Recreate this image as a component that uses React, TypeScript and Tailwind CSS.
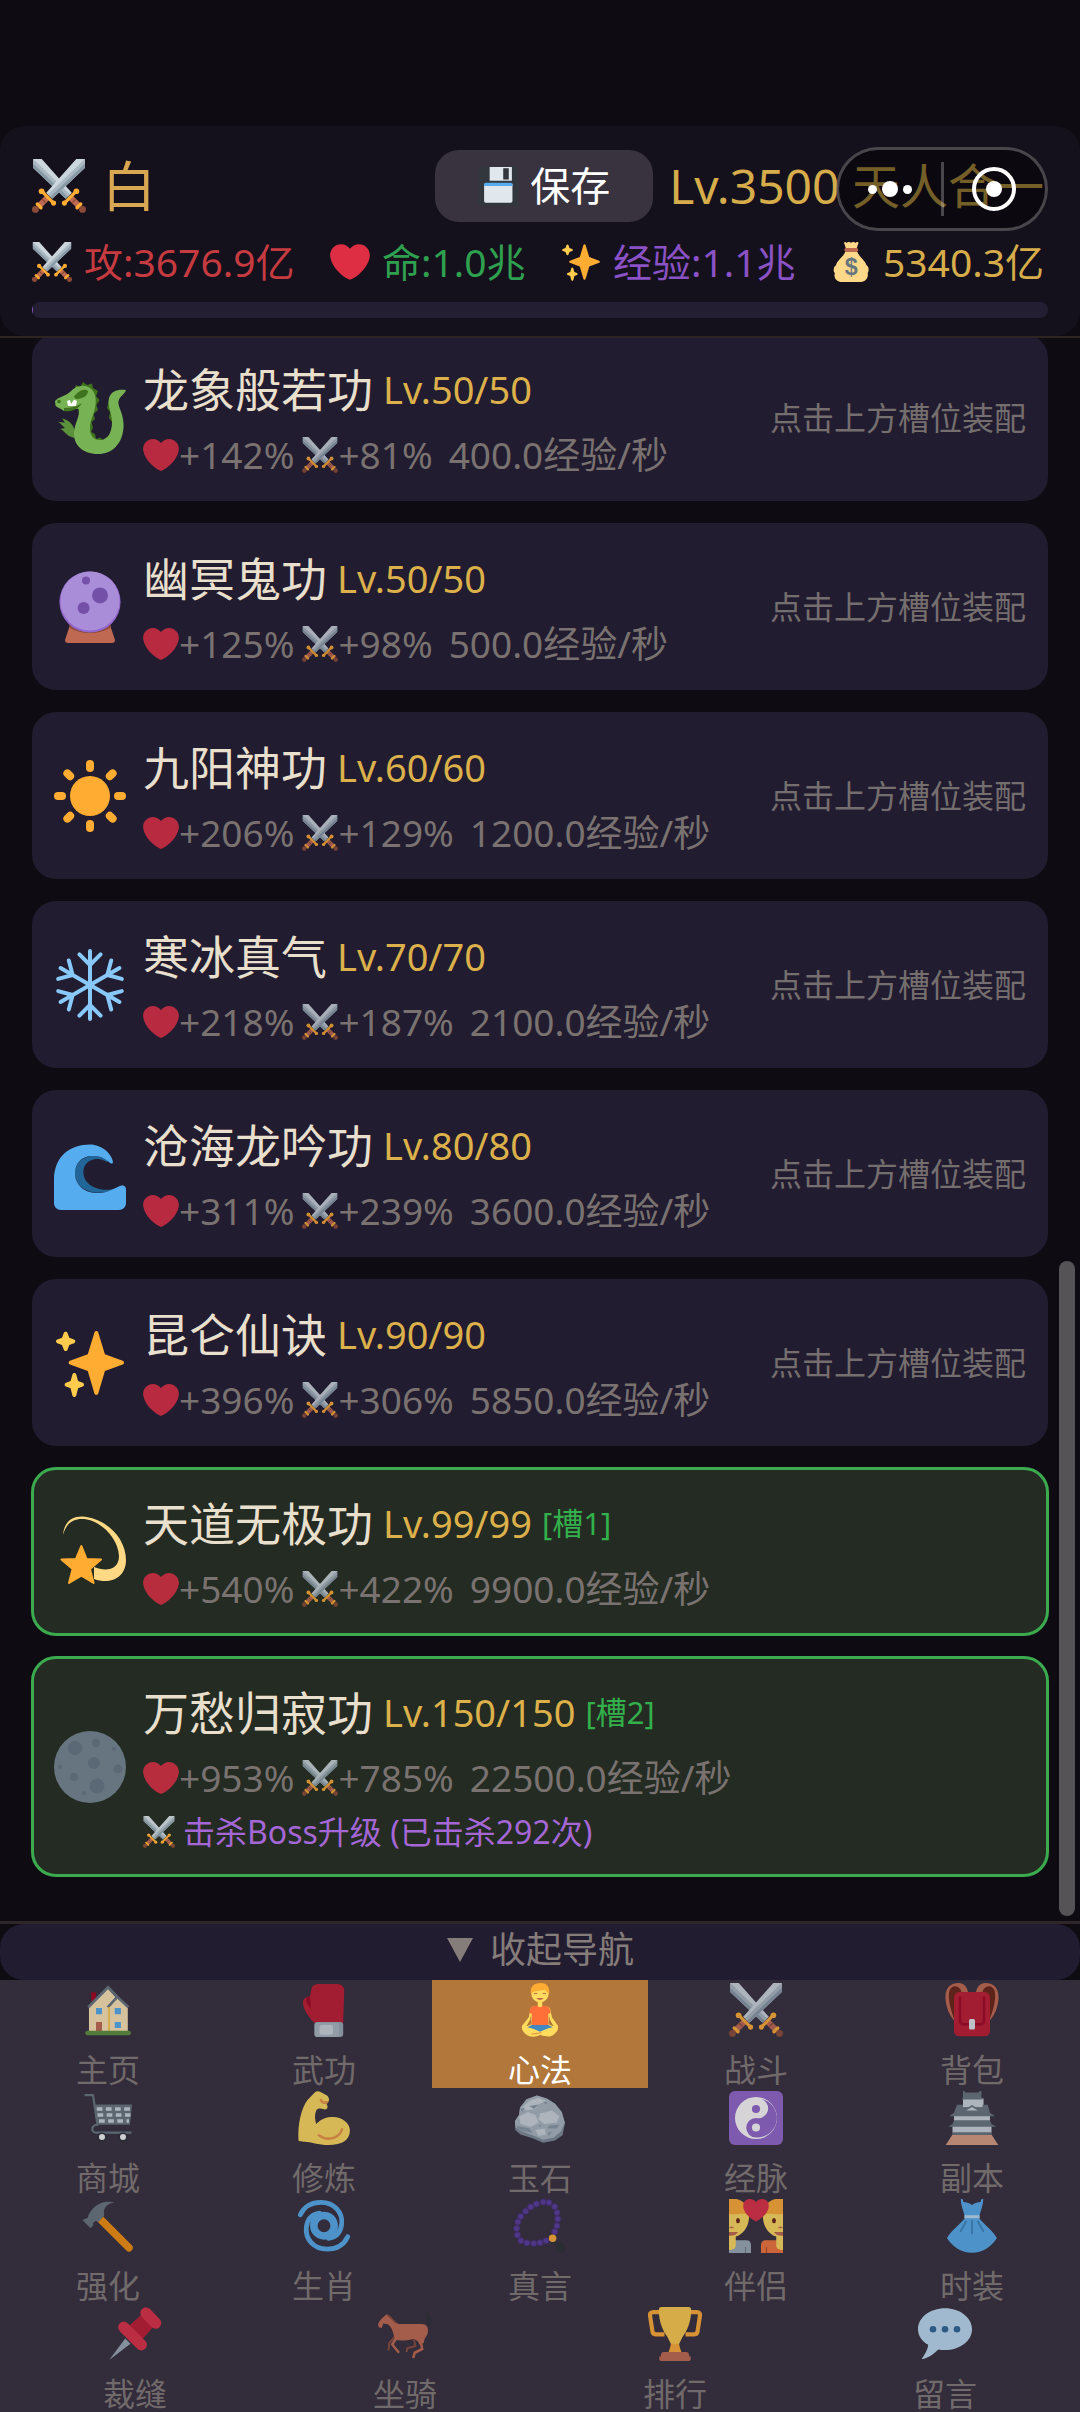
import type { ReactNode } from 'react';

type IconName =
  | 'swords' | 'heart' | 'sparkles' | 'money' | 'disk' | 'dragon' | 'crystal' | 'sun' | 'snow' | 'wave'
  | 'dizzy' | 'moon' | 'house' | 'glove' | 'lotus' | 'backpack' | 'cart' | 'muscle' | 'rock' | 'yinyang'
  | 'castle' | 'hammer' | 'cyclone' | 'beads' | 'couple' | 'dress' | 'pin' | 'horse' | 'trophy' | 'speech';

const sword = (
  <>
    <path fill="#CCD6DD" d="M29.5 0H35.2V6L13.5 26.5 9.5 22.5Z" />
    <path fill="#8899A6" d="M35.2 3V6L13.5 26.5 11.5 24.5Z" />
    <path fill="#AAB8C2" d="M35.2 0 35.2 3 12.2 25.2 10.6 23.6Z" />
    <path stroke="#BF6952" strokeWidth="4" d="M10 26 4 32" />
    <path stroke="#8A4B38" strokeWidth="1" d="M6.5 26.5 9 29" />
    <path stroke="#FFAC33" strokeWidth="2.2" strokeLinecap="round" d="M6.8 21.8 14.2 29.2M3.5 30 6 32.5" />
    <circle cx="6.4" cy="21.5" r="1.9" fill="#FFAC33" />
    <circle cx="14.4" cy="29.4" r="1.7" fill="#FFAC33" />
    <circle cx="2.3" cy="33.6" r="2.3" fill="#8A4B38" />
  </>
);

const beadPoints = [
  [20.2, 2], [24, 2.4], [27.8, 5.1], [29.3, 9.1], [29.8, 13.3], [29.3, 17.8], [27.8, 21.8], [22, 27.8], [18, 29.1],
  [13.8, 29.6], [9.3, 29.3], [5.3, 27.8], [2.9, 24], [2.4, 19.6], [3.3, 15.3], [5.1, 11.6], [8.4, 8.2], [11.8, 5.3],
  [15.6, 3.3]
];

const halfFace = (
  <>
    <path fill="#FFDC5D" d="M0 3H10C13 6 13.8 10 13.2 14 12.6 19 9 24 4.5 25V31C4.5 33 2.5 34 0 34Z" />
    <path fill="#FFAC33" d="M0 0H5C10 1 13 5 13.8 11 11 8.500 4 11 0 10Z" />
    <ellipse cx="6" cy="14.4" rx="1.3" ry="1.8" fill="#662113" />
    <path stroke="#C1694F" strokeWidth="1" d="M0.500 19H3" />
    <path fill="#C1694F" d="M0 22H6C5 24 3 24.500 0 24.500Z" />
  </>
);

const icons: Record<IconName, ReactNode> = {
  swords: (
    <>
      <g transform="translate(36) scale(-1 1)">{sword}</g>
      {sword}
    </>
  ),
  heart: (
    <path fill="#DD2E44" d="M35.885 11.833c0-5.45-4.418-9.868-9.867-9.868-3.308 0-6.227 1.633-8.018 4.129-1.791-2.496-4.71-4.129-8.017-4.129-5.45 0-9.868 4.417-9.868 9.868 0 .772.098 1.52.266 2.241C1.751 22.587 11.216 31.568 18 34.034c6.783-2.466 16.249-11.447 17.617-19.959.17-.721.268-1.469.268-2.242z" />
  ),
  sparkles: (
    <>
      <path fill="#FFAC33" d="M34.347 16.893l-8.899-3.294-3.323-10.891c-.128-.42-.517-.708-.956-.708-.439 0-.828.288-.956.708l-3.322 10.891-8.9 3.294c-.393.146-.653.519-.653.938 0 .418.26.793.653.938l8.895 3.293 3.324 11.223c.126.424.516.715.959.715.442 0 .833-.291.959-.716l3.324-11.223 8.896-3.293c.391-.144.652-.518.652-.937 0-.418-.261-.792-.653-.938z" />
      <path fill="#FFCC4D" d="M14.347 27.894l-2.314-.856-.9-3.3c-.118-.436-.513-.738-.964-.738-.451 0-.846.302-.965.737l-.9 3.3-2.313.856c-.393.146-.653.52-.653.938 0 .418.26.793.653.938l2.301.853.907 3.622c.112.444.511.756.97.756.459 0 .858-.312.97-.757l.907-3.622 2.301-.853c.393-.144.653-.519.653-.937 0-.418-.26-.793-.653-.937zM10.009 6.231l-2.364-.875-.876-2.365c-.145-.393-.519-.653-.938-.653-.418 0-.792.26-.938.653l-.875 2.365-2.365.875c-.393.146-.653.52-.653.938 0 .418.26.793.653.938l2.365.875.875 2.365c.146.393.52.653.938.653.418 0 .792-.26.938-.653l.875-2.365 2.365-.875c.393-.146.653-.52.653-.938 0-.418-.26-.792-.653-.938z" />
    </>
  ),
  money: (
    <>
      <path fill="#FDD888" d="M12 1.500C11 0 13 -.5 14 .8 15-.3 17-.3 18 .8 19-.3 21-.3 22 .8 23-.5 25.500 0 24.500 1.500L23 6H13.500ZM13 8.500H23.500C25 13 31 17 32 21 34 22 34.500 26 33 28 34 32 31 36 27 36H10C5 36 2 32 3.500 28 1.500 26 2.500 22 4.500 21 5 17 11.500 13 13 8.500Z" />
      <rect x="12" y="5.500" width="12.500" height="3.200" rx="1.500" fill="#BF6952" />
      <text x="18.200" y="29.500" textAnchor="middle" fontSize="21" fontWeight="700" fontFamily="Liberation Sans, sans-serif" fill="#67757F">$</text>
    </>
  ),
  disk: (
    <>
      <path fill="#31373D" d="M2 0H33L36 3V34Q36 36 34 36H2Q0 36 0 34V2Q0 0 2 0Z" />
      <path fill="#E1E8ED" d="M10.500 1H30.500V13.200H10.500ZM5.500 16H31V31.500Q31 33 29.500 33H7Q5.500 33 5.500 31.500Z" />
      <path fill="#31373D" d="M22.700 2H27.700V12.200H22.700Z" />
      <path fill="#55ACEE" d="M7 15H29.500Q31 15 31 16.500V18H5.500V16.500Q5.500 15 7 15Z" />
    </>
  ),
  dragon: (
    <>
      <path fill="#3E721D" d="M10 4 11 1.500 13 2.500 14.500 0 16.500 1.500 19 .8 19.500 3 22 4.500 21 7 22.800 9 21.200 11.500 22 14 19.800 16 20.500 18.500 18.800 20 19.500 23 18.500 25 20.500 26 21 28.500 23 27.800 24.500 29 26.500 27.500 28 27.500 28.500 24.500 30 23 29 20 27.500 18 28 15 26.500 13 27.500 9 29 7 30 12 30 24 24 31 15 28Z" />
      <path fill="#5C913B" d="M10 28C6 27 5 24 3 23.500L5.500 23C4 22 3.500 20.500 2 20L5.500 20.300C5 19.500 4.500 19 4 18.200 8 19 10.500 22 10.500 26Z" />
      <path fill="#77B255" d="M.5 9.500C2 7.500 6 7 8 5 11 1.800 15 1 18 3 21 5 21.300 9 20.500 13 19.700 17 18 19 18 23 18 27 20 29 23 29 27 29 29 25 29 20 29 15 26.500 12 27.500 8 28.500 4.500 32 3.500 36 4 35.500 6 32.800 7 32.300 9.500 31.500 12 34.800 15 34.800 22 34.500 31 29 36 22 36 14 36 9.500 31 10 25 10.300 21 13 17 12.500 13.500 10 13 8 14.500 5 14.500 4 13.500 2 13 .8 12Z" />
      <path fill="#3E721D" d="M10 7.500C12 4.500 15 3 17 4.500 17 7 14 8.500 11 8.500ZM5 13C8 13 11 12.500 14 10.500 12 14 8 15 5 14.500Z" />
      <path fill="#FFF" d="M6.500 9.500 8 9 8.500 11 10 8.800 11.500 9.500 11 12H7Z" />
      <circle cx="2.500" cy="9.800" r=".9" fill="#3E721D" />
    </>
  ),
  crystal: (
    <>
      <path fill="#BF6952" d="M8 27H28L30.500 34.500Q30.500 36 29 36H7Q5.500 36 5.500 34.500Z" />
      <path fill="#8A4B38" d="M7.500 28C13 32 23 32 28.500 28L28 26H8Z" />
      <circle cx="18" cy="15.500" r="15.300" fill="#9266CC" />
      <circle cx="18" cy="15" r="14.800" fill="#AA8DD8" />
      <circle cx="16" cy="4.800" r="2" fill="#7450A8" />
      <circle cx="23" cy="12.200" r="4" fill="#7450A8" />
      <circle cx="14.800" cy="18.500" r="3" fill="#7450A8" />
    </>
  ),
  sun: (
    <g fill="#FFAC33">
      <circle cx="18" cy="18" r="10" />
      {[0, 45, 90, 135, 180, 225, 270, 315].map((a) => (
        <rect key={a} x="16" y="0" width="4" height="6" rx="2" transform={`rotate(${a} 18 18)`} />
      ))}
    </g>
  ),
  snow: (
    <g stroke="#88C9F9" strokeWidth="2" strokeLinecap="round" strokeLinejoin="round">
      {[0, 60, 120, 180, 240, 300].map((a) => (
        <path key={a} d="M18 18V1M12.700 2.700 18 8 23.300 2.700" transform={`rotate(${a} 18 18)`} />
      ))}
    </g>
  ),
  wave: (
    <>
      <path fill="#269" d="M27 11C18 6 10 11 10.500 18 11 26 20 30 32 25.500L25 22Z" />
      <path fill="#55ACEE" fillRule="evenodd" d="M0 21C0 9 8 3.200 18 3.200 24 3.200 29 8 29.500 12 29.300 13 28.500 13 27.500 12 25 9.800 23 9 19 9 13.500 9 10.500 13 10.500 17.500 10.500 24 16 28 23 27.500 29 27 31 24 33.800 23.600 35 23.600 36 24.300 36 25.500V32.500C36 34.500 34.500 36 32.500 36H3.500C1.500 36 0 34.500 0 32.500Z" />
      <path fill="#211c2f" d="M28 13C22 8 14.700 11 14.700 17 14.700 23 21 26.500 28 25.800 31 25.400 32 24 33.800 23.600L34 14Z" />
    </>
  ),
  dizzy: (
    <>
      <path fill="#FFD983" d="M4.500 9.500C5 3 9 .2 14 .3 26 1 36 11 36 22 36 31 28 34.500 20 31.500L20 25.500C26 28 32.500 27 32.500 20 32 10 22 1.500 14 1.500 9 1.500 6 4 4.500 9.500Z" />
      <path fill="#FFAC33" stroke="#FFAC33" strokeWidth="1" strokeLinejoin="round" d="M13.700 15 16.300 21.500 23.500 21.800 18 26.500 19.800 33.500 13.700 29.800 7.500 33.500 9.300 26.500 3.700 21.800 11 21.500Z" />
    </>
  ),
  moon: (
    <>
      <circle cx="18" cy="18" r="18" fill="#66757F" />
      <g fill="#5B6876">
        <circle cx="10.500" cy="8.500" r="3.600" />
        <circle cx="21" cy="6" r="2.100" />
        <circle cx="20" cy="16" r="3" />
        <circle cx="10" cy="23" r="2.100" />
        <circle cx="21.500" cy="27.500" r="3.700" />
        <circle cx="32" cy="19" r="2.200" />
        <circle cx="30" cy="9" r="1" />
        <circle cx="3" cy="18" r="1.100" />
        <circle cx="15" cy="31" r="1" />
      </g>
    </>
  ),
  house: (
    <>
      <path fill="#A0041E" d="M6.800 6.200H10V12H6.800Z" />
      <path fill="#FFE8B6" d="M5.300 32V15L18 3.500 23 9.500 31.200 15V32Z" />
      <path stroke="#66757F" strokeWidth="1.800" d="M4.800 16.200 18 2.800 24 9M17.800 16.200 24.200 9.200 31.600 16.200" />
      <path stroke="#FFCC4D" strokeWidth="1.200" d="M18.700 16V32" />
      <path fill="#55ACEE" d="M10 16.700H14V20.800H10ZM22.500 16.700H26.600V20.800H22.500ZM22.500 26H26.600V30H22.500Z" />
      <path fill="#C1694F" d="M10 26H14V32H10Z" />
      <rect x="2.800" y="31.800" width="30.500" height="3" rx="1.500" fill="#5C913B" />
    </>
  ),
  glove: (
    <>
      <path fill="#BE1931" d="M9.500 5C9.500 2 11.500.6 14.500.6H27C30 .6 31.500 2.500 31.500 5.500L30.800 26.500H11.500C7 22 4 17 4 13 4 10.500 5.500 9.500 8.500 9Z" />
      <path fill="#A0041E" d="M8.500 9C6.500 9 5.500 10.500 6.500 13 7.500 15 9.500 17 9.800 19 8.500 15 9.500 12 8.500 9Z" />
      <rect x="11.500" y="26" width="19.300" height="10" rx="2" fill="#99AAB5" />
      <rect x="12" y="26.500" width="16" height="9.500" rx="2" fill="#AAB8C2" />
      <rect x="15" y="28" width="9" height="6.500" rx="1.500" fill="#CCD6DD" />
    </>
  ),
  lotus: (
    <>
      <path fill="#FFDC5D" d="M16.500 12H19.500V15.500L23 15.800C24.500 16 25 17 25 18.500L26 23 30 28.500C30.500 31 29 33 27 34.500 25 36.500 21 35.500 18 34.500 15 36.500 11 36 9 34.500 7 33 5.500 31 6 28.500L10.500 23 11.500 18C11.500 17 12 16 13 15.800L16.500 15.500Z" />
      <path fill="#B2773B" d="M12 21.500 12.400 27.500 8.800 29 11.400 24.500ZM24 21.500 23.600 27.500 27.200 29 24.600 24.500Z" />
      <circle cx="18" cy="7" r="5.800" fill="#FFDC5D" />
      <path fill="#FFAC33" d="M12 7.500C11 2.500 14 0 18.500 0 22.500 0 25 3 24 7.500 23 6 22 5 21 4.500 17.500 5.500 14 4.500 12 7.500Z" />
      <path stroke="#C1694F" strokeWidth=".7" d="M14 7.300Q15.200 6.300 16.200 7.300M19.800 7.300Q20.800 6.300 22 7.300" />
      <path fill="#C1694F" d="M15.500 10H20.500Q18 12.500 15.500 10Z" />
      <path fill="#FF7038" d="M13 15.500 16 15C17 16.500 19 16.500 20 15L23 15.500C25 17 25 19 25 20L23.500 20.500V28H12.500V20.500L11 20C11 18 11.500 16.500 13 15.500Z" />
      <path fill="#FFDC5D" d="M6 29C10 27.500 14 30 18 32 22 30 26 27.500 30 29 30 33 24 36 18 34.500 12 36 6 34 6 29Z" />
      <path fill="#4289C1" d="M12.500 28H23.500L26.500 29.500C23 30 20.500 31.500 18 32.500 15 31 12.500 30 9.500 29.500Z" />
      <path stroke="#EF9645" strokeWidth=".7" d="M12 34Q16 34 19 33" />
    </>
  ),
  backpack: (
    <>
      <path fill="#662113" d="M3 2C7-1 11 1 11 7L8 28C3 22-2 8 3 2ZM33 2C29-1 25 1 25 7L28 28C33 22 38 8 33 2Z" />
      <path fill="#C1694F" d="M.3 10C0 3 4 0 9 0 13 0 15 3 15.500 7H11C11 2 5 0 3 5 1.500 10 4 19 7 26 3 22 .5 16 .3 10ZM35.700 10C36 3 32 0 27 0 23 0 21 3 20.500 7H25C25 2 31 0 33 5 34.500 10 32 19 29 26 33 22 35.500 16 35.700 10Z" />
      <rect x="6" y="6" width="24" height="29.500" rx="3.500" fill="#BE1931" />
      <path stroke="#A0041E" strokeWidth="1.600" d="M10 9V25Q10 27.500 12.500 27.500H23.500Q26 27.500 26 25V9" />
      <rect x="16" y="24" width="4" height="7" rx="1" fill="#E1E8ED" />
    </>
  ),
  cart: (
    <>
      <path fill="#66757F" d="M9 9H34L32.600 22.500H11.500Z" />
      <path stroke="#66757F" strokeWidth="1.500" strokeLinejoin="round" d="M2.300 2.700H8L11 22.500C6 23 7 27.800 10 27.800H33.700" />
      <path stroke="#CCD6DD" strokeWidth="2.200" strokeDasharray="3.800 2.300" d="M10.500 12H33.500M11 16H33M12 20H32" />
      <circle cx="14" cy="30.700" r="3" fill="#292F33" />
      <circle cx="28" cy="30.700" r="3" fill="#292F33" />
      <circle cx="14" cy="30.700" r="2" fill="#F5F8FA" />
      <circle cx="28" cy="30.700" r="2" fill="#F5F8FA" />
    </>
  ),
  muscle: (
    <>
      <path fill="#FFDC5D" d="M1 33C.3 22 3 11 7 6L12 .8C13 0 14.500 0 16 .8L20 3C22 5 21.500 7 20.500 7.500L19.500 8.500C21 10 20.500 12.500 18.500 12.300 16 11.500 14 11 12.800 13 11.500 16 12 19 12.800 22 16 18.500 20 17.300 24 17.300 30 17.500 35.300 21 35.300 26.500 35 33 30 35.800 21 36 14 36 8 33.500 4.500 33.800 3 33.700 2 33.800 1 33Z" />
      <path stroke="#EF9645" strokeWidth="1.700" strokeLinecap="round" d="M14.500 29.500C20 33.500 28 32 30 25.500M16 6Q17 8.500 20 7.500" />
    </>
  ),
  rock: (
    <>
      <path fill="#7B8B97" d="M4.700 11 9 5.500 16 3 22.500 5 28 8.500 32.500 14 34.700 21.500 33 29.500 28 33 20 34.500 13 31.500 5 29 1.500 26 1.300 20 4 16Z" />
      <path fill="#AAB8C2" d="M4.700 11 9 5.500 16 3 22.500 5 28 8.500 32.500 14 34.500 21 32 27 27 31 20 32.500 13 29.500 5 26.500 1.500 24 1.300 20 4 16Z" />
      <path fill="#CCD6DD" d="M6 11 11 6.500 17 4.500 22 6.500 17 9 15 12 9 13ZM4 17 10 14 15 16 17 21 12 24 5 22ZM18 15 26 13 31 17 29 21 21 22 17 19ZM15 26 21 25 22 29 17 30Z" />
      <path fill="#8899A6" d="M11 10 17 9 14 12ZM5 12 8 11 6 14ZM2 23 11 25 13 28 4 26ZM24 23 31 22.500 29 25 23 25ZM17 23 19 22.500 18.500 24ZM20 7 23 7.500 22 9ZM23 28 26 27 24 30Z" />
    </>
  ),
  yinyang: (
    <>
      <rect width="36" height="36" rx="4" fill="#9266CC" />
      <circle cx="18" cy="18" r="14" fill="#FFF" />
      <path fill="#9266CC" d="M21 5.200A13 13 0 0 1 18 31A6.500 6.500 0 0 1 18 18A6.500 6.500 0 0 0 21 5.200Z" />
      <circle cx="18" cy="12" r="2.700" fill="#9266CC" />
      <circle cx="18" cy="24.300" r="2.700" fill="#FFF" />
    </>
  ),
  castle: (
    <>
      <path fill="#D99E82" d="M5 29H31L35.500 36H.5Z" />
      <path fill="#CCD6DD" d="M5 23H31V28H5ZM6 16H30V20H6ZM12 5H25.700V11H12Z" />
      <path fill="#66757F" d="M12 0H13L13.500 1H22.500L23 0H24.300V4L25 5.700H11.300L12 4ZM8 9.200H12V11H25V9.200H28.500L30 14.500 33.500 16.800H2.800L6 14.500ZM6 19.500H30L31 22 34.300 23.800H2L5 22ZM5 27.500H31V29.200H5Z" />
      <path fill="#CCD6DD" stroke="#66757F" strokeWidth="1" d="M11.500 14 18 10 24.500 14 21 13.500H15Z" />
    </>
  ),
  hammer: (
    <>
      <path stroke="#F4900C" strokeWidth="5" strokeLinecap="round" d="M13 13.500 32 32.500" />
      <path fill="#66757F" d="M1 14 4.500 12.500C5 9 9 4.500 13 2.800 16 1.700 20 1.500 22.300 2.400 17.500 3 15 6 15.300 9.500L15.500 11 11.500 15.500 10 14.500 8 16 8.200 17.500 6.300 19.500Z" />
    </>
  ),
  cyclone: (
    <g stroke="#55ACEE" strokeLinecap="round">
      <circle cx="18" cy="17.800" r="6.800" strokeWidth="5" />
      {[0, 180].map((a) => (
        <path key={a} strokeWidth="3.200" d="M2.200 10.500C5 4.500 10 2.200 16 2.200 25 2.200 30.500 9 29.800 16.500 29.200 22 26 25.500 21 26.200" transform={`rotate(${a} 18 17.800)`} />
      ))}
    </g>
  ),
  beads: (
    <>
      {beadPoints.map(([x, y]) => (
        <circle key={`${x}-${y}`} cx={x} cy={y} r="2" fill="#553B9A" stroke="#452B7C" strokeWidth=".6" />
      ))}
      <path fill="#292F33" d="M27 27.500C31 27 34.500 29.500 35 33.500L33 36 29 34.500Z" />
      <circle cx="26.400" cy="26.200" r="2.500" fill="#FFAC33" />
    </>
  ),
  couple: (
    <>
      <path fill="#99AAB5" d="M0 27.500H11.500Q14.700 27.500 14.700 31V36H0Z" />
      <path fill="#F4743B" d="M36 27.500H24.500Q21.300 27.500 21.300 31V36H36Z" />
      <path stroke="#66757F" strokeWidth=".6" d="M11 32V36" />
      <path stroke="#A0441E" strokeWidth=".6" d="M25 32V36" />
      {halfFace}
      <g transform="translate(36) scale(-1 1)">{halfFace}</g>
      <path fill="#DD2E44" d="M18 15C13 12.500 9.500 8.500 9.500 4.500 9.500 1.500 11.500 0 14 0 16 0 17.300 1 18 2.200 18.700 1 20 0 22 0 24.500 0 26.500 1.500 26.500 4.500 26.500 8.500 23 12.500 18 15Z" />
    </>
  ),
  dress: (
    <>
      <path fill="#55ACEE" d="M10.500 0H11.700L12.300 2C14 2 16 2.500 18 4 20 2.500 22 2 23.700 2L24.300 0H25.500C25.500 4 24 7 23 11V13C26 17 31 20 34.600 26 31 32 25 35.800 18 35.800S5 32 1.300 26C5 20 10 17 13 13V11C12 7 10.500 4 10.500 0Z" />
      <path fill="#BBDDF5" d="M13 10.800H23V12.800H13Z" />
      <path stroke="#3B88C3" strokeWidth="1.300" strokeLinecap="round" d="M18 14.500V23M14 15 10.500 21.500M22 15 25.500 21.500" />
    </>
  ),
  pin: (
    <>
      <path fill="#99AAB5" d="M.8 35.400 11.500 21 15 24.500Z" />
      <path fill="#BE1931" d="M14 12.500 22.500 5 30 13.500 22.500 22Z" />
      <path stroke="#DD2E44" strokeWidth="7.500" strokeLinecap="round" d="M10.500 13.500 22.200 25.200M25.300 4 31.800 10.800" />
    </>
  ),
  horse: (
    <>
      <path fill="#292F33" d="M32 11C34 9 31 6 32 3.500 35 5 36.500 9 34 13Z" />
      <path stroke="#8A4B38" strokeWidth="1.300" d="M11 20 7.500 24 7 29M24 22 25 26 19.500 27.500 19 30" />
      <path stroke="#C1694F" strokeWidth="1.700" d="M12 21 9.500 25 14 30.500M28 21 29.500 28 24.500 30.500 23.500 34" />
      <path fill="#C1694F" d="M0 11.500C1 9 3 7 4.500 6L6 4.500 6.500 6C9 7 11 10.500 14 11.300H29C33 11.500 34 14 33 18 32 20 30.500 21.500 30.500 24L27.500 25C27 22.500 25 21.500 23 21.500 19 22.500 15 22.500 11.500 22 10 18 10 14 6.500 11.500L3.500 11 2.500 14 .5 13.500Z" />
      <path stroke="#8A4B38" strokeWidth="1" d="M6.500 5.500C8.500 6.500 10 9 12.500 11" />
    </>
  ),
  trophy: (
    <>
      <path stroke="#FFAC33" strokeWidth="2.800" strokeLinejoin="round" d="M8.500 3.400H3.500Q1 3.400 1.400 6L3 16.500Q3.400 18.300 5.500 18.300H11M27.500 3.400H32.500Q35 3.400 34.600 6L33 16.500Q32.600 18.300 30.500 18.300H25" />
      <path fill="#FFAC33" d="M15.500 22H20.500C20.500 25 21.500 28 22.500 30.500H13.500C14.500 28 15.500 25 15.500 22Z" />
      <path fill="#FFCC4D" d="M9 0H27Q28.800 0 28.800 2C28.800 10 26 16 23 20L20.800 24.500H15.200L13 20C10 16 7.200 10 7.200 2Q7.200 0 9 0Z" />
      <path fill="#C1694F" d="M10.500 30H25.500Q27.500 30 27.500 33H28.500V35L27.700 36H8.300L7.500 35V33H8.500Q8.500 30 10.500 30Z" />
    </>
  ),
  speech: (
    <>
      <path fill="#BDDDF4" d="M18 .8C8 .8 0 7 0 14.800 0 19 2.500 22.800 6.800 25.200 6.500 29 4 32 2.500 34.800 7 34 11 31 13.500 28.300 15 28.600 16.500 28.700 18 28.700 28 28.700 36 22.500 36 14.800S28 .8 18 .8Z" />
      <circle cx="10" cy="14.800" r="2.200" fill="#2A6797" />
      <circle cx="18" cy="14.800" r="2.200" fill="#2A6797" />
      <circle cx="26" cy="14.800" r="2.200" fill="#2A6797" />
    </>
  )
};

const Icon = ({ name, className }: { name: IconName; className: string }) => (
  <svg viewBox="0 0 36 36" fill="none" aria-hidden="true" className={`shrink-0 ${className}`}>
    {icons[name]}
  </svg>
);

interface Skill {
  icon: IconName;
  name: string;
  level: string;
  hp: number;
  atk: number;
  exp: string;
  slot?: number;
  note?: string;
}

const skills: Skill[] = [
  { icon: 'dragon', name: '龙象般若功', level: '50/50', hp: 142, atk: 81, exp: '400.0' },
  { icon: 'crystal', name: '幽冥鬼功', level: '50/50', hp: 125, atk: 98, exp: '500.0' },
  { icon: 'sun', name: '九阳神功', level: '60/60', hp: 206, atk: 129, exp: '1200.0' },
  { icon: 'snow', name: '寒冰真气', level: '70/70', hp: 218, atk: 187, exp: '2100.0' },
  { icon: 'wave', name: '沧海龙吟功', level: '80/80', hp: 311, atk: 239, exp: '3600.0' },
  { icon: 'sparkles', name: '昆仑仙诀', level: '90/90', hp: 396, atk: 306, exp: '5850.0' },
  { icon: 'dizzy', name: '天道无极功', level: '99/99', hp: 540, atk: 422, exp: '9900.0', slot: 1 },
  { icon: 'moon', name: '万愁归寂功', level: '150/150', hp: 953, atk: 785, exp: '22500.0', slot: 2, note: '击杀Boss升级 (已击杀292次)' }
];

const navItems: { icon: IconName; label: string }[] = [
  { icon: 'house', label: '主页' },
  { icon: 'glove', label: '武功' },
  { icon: 'lotus', label: '心法' },
  { icon: 'swords', label: '战斗' },
  { icon: 'backpack', label: '背包' },
  { icon: 'cart', label: '商城' },
  { icon: 'muscle', label: '修炼' },
  { icon: 'rock', label: '玉石' },
  { icon: 'yinyang', label: '经脉' },
  { icon: 'castle', label: '副本' },
  { icon: 'hammer', label: '强化' },
  { icon: 'cyclone', label: '生肖' },
  { icon: 'beads', label: '真言' },
  { icon: 'couple', label: '伴侣' },
  { icon: 'dress', label: '时装' },
  { icon: 'pin', label: '裁缝' },
  { icon: 'horse', label: '坐骑' },
  { icon: 'trophy', label: '排行' },
  { icon: 'speech', label: '留言' }
];

const stats: { icon: IconName; text: string; color: string }[] = [
  { icon: 'swords', text: '攻:3676.9亿', color: 'text-[#c53b40]' },
  { icon: 'heart', text: '命:1.0兆', color: 'text-[#2fa04f]' },
  { icon: 'sparkles', text: '经验:1.1兆', color: 'text-[#8a52c4]' },
  { icon: 'money', text: '5340.3亿', color: 'text-[#d6ad4a]' }
];

const Header = () => (
  <header className="border-b-2 border-[#2e2422]">
    <div className="rounded-3xl bg-[#14101c] px-8 pt-6 pb-[18px]">
      <div className="flex items-center justify-between pr-1">
        <h1 className="flex items-center gap-4 text-[54px] leading-[72px] text-[#d9a752]">
          <Icon name="swords" className="size-[54px]" />
          白
        </h1>
        <div className="flex items-center gap-4">
          <button className="flex h-[72px] items-center gap-3 rounded-3xl bg-[#39333f] px-[43px] text-[40px] text-white">
            <Icon name="disk" className="size-10" />
            保存
          </button>
          <span className="text-[48px] leading-[72px] whitespace-nowrap text-[#d6ad4a]">Lv.3500 天人合一</span>
        </div>
      </div>
      <div className="mt-2 flex items-center justify-between pr-1 text-[39px] leading-[64px] whitespace-nowrap">
        {stats.map((s) => (
          <span key={s.icon} className={`flex items-center gap-3 ${s.color}`}>
            <Icon name={s.icon} className="size-10" />
            {s.text}
          </span>
        ))}
      </div>
      {/* Exp bar */}
      <div className="mt-2 h-4 overflow-hidden rounded-lg bg-[#231e31]">
        <div className="h-full w-px bg-[#8a52c4]" />
      </div>
    </div>
  </header>
);

const Capsule = () => (
  <div className="absolute top-[147px] right-8 flex h-[84px] w-[212px] items-center rounded-full border-[3px] border-white/25 bg-black/45">
    <button aria-label="更多" className="flex h-full flex-1 items-center justify-center gap-[5px]">
      <span className="size-[9px] rounded-full bg-white" />
      <span className="size-4 rounded-full bg-white" />
      <span className="size-[9px] rounded-full bg-white" />
    </button>
    <span className="h-[54px] w-[3px] bg-white/25" />
    <button aria-label="关闭" className="flex h-full flex-1 items-center justify-center">
      <span className="flex size-11 items-center justify-center rounded-full border-4 border-white">
        <span className="size-4 rounded-full bg-white" />
      </span>
    </button>
  </div>
);

const SkillCard = ({ skill }: { skill: Skill }) => (
  <li
    className={`flex items-center gap-[17px] rounded-3xl px-[22px] py-5 ${
      skill.slot ? 'bg-[#232b22] outline-[3px] -outline-offset-2 outline-[#3cab50]' : 'bg-[#211c2f]'
    }`}
  >
    <Icon name={skill.icon} className="size-[72px]" />
    <div className="flex-1 whitespace-nowrap">
      <div className="flex h-[70px] items-center gap-[10px]">
        <span className="text-[46px] text-[#e8dfcc]">{skill.name}</span>
        <span className="text-[38px] text-[#dcb04a]">Lv.{skill.level}</span>
        {skill.slot && <span className="text-[31px] text-[#33b04c]">[槽{skill.slot}]</span>}
      </div>
      <div className="mt-[5px] flex h-[52px] items-center text-[37px] text-[#797270]">
        <Icon name="heart" className="size-9 opacity-80" />
        <span className="mr-2">+{skill.hp}%</span>
        <Icon name="swords" className="size-9 opacity-80" />
        <span className="mr-4">+{skill.atk}%</span>
        <span>{skill.exp}经验/秒</span>
      </div>
      {skill.note && (
        <div className="mt-1 flex h-12 items-center gap-2 text-[32px] text-[#a566d6]">
          <Icon name="swords" className="size-8 opacity-90" />
          {skill.note}
        </div>
      )}
    </div>
    {!skill.slot && <span className="text-[32px] whitespace-nowrap text-[#756e6e]">点击上方槽位装配</span>}
  </li>
);

const BottomNav = () => (
  <footer className="border-t-[3px] border-[#2e2628]">
    <button className="flex h-14 w-full items-center justify-center gap-4 rounded-3xl bg-[#221c31] pb-1 text-[36px] text-[#857d79]">
      <svg viewBox="0 0 28 24" className="h-6 w-7" aria-hidden="true">
        <path d="M1 0H27L14 24Z" fill="currentColor" />
      </svg>
      收起导航
    </button>
    <nav className="flex flex-wrap bg-[#322c3b]">
      {navItems.map((item) => {
        const active = item.label === '心法';
        return (
          <button
            key={item.label}
            className={`flex h-[108px] grow basis-1/5 flex-col items-center justify-between pt-[3px] pb-0.5 text-[32px] leading-8 ${
              active ? 'bg-[#b2773b] text-white' : 'text-[#716a6a]'
            }`}
          >
            <Icon name={item.icon} className={active ? 'size-[54px]' : 'size-[54px] opacity-80'} />
            {item.label}
          </button>
        );
      })}
    </nav>
  </footer>
);

export default function App() {
  return (
    <div className="relative flex h-screen flex-col bg-[#0e0b12] pt-[126px] font-['Noto_Sans','Noto_Sans_CJK_SC',sans-serif]">
      <Header />
      <main className="relative flex min-h-0 flex-1 flex-col justify-end overflow-hidden px-8 pb-[45px]">
        <ul className="flex flex-col gap-[22px]">
          {skills.map((skill) => (
            <SkillCard key={skill.name} skill={skill} />
          ))}
        </ul>
        {/* Scroll thumb */}
        <div className="absolute right-[5px] bottom-[5px] h-[655px] w-4 rounded-full bg-[#555355]" />
      </main>
      <BottomNav />
      <Capsule />
    </div>
  );
}
